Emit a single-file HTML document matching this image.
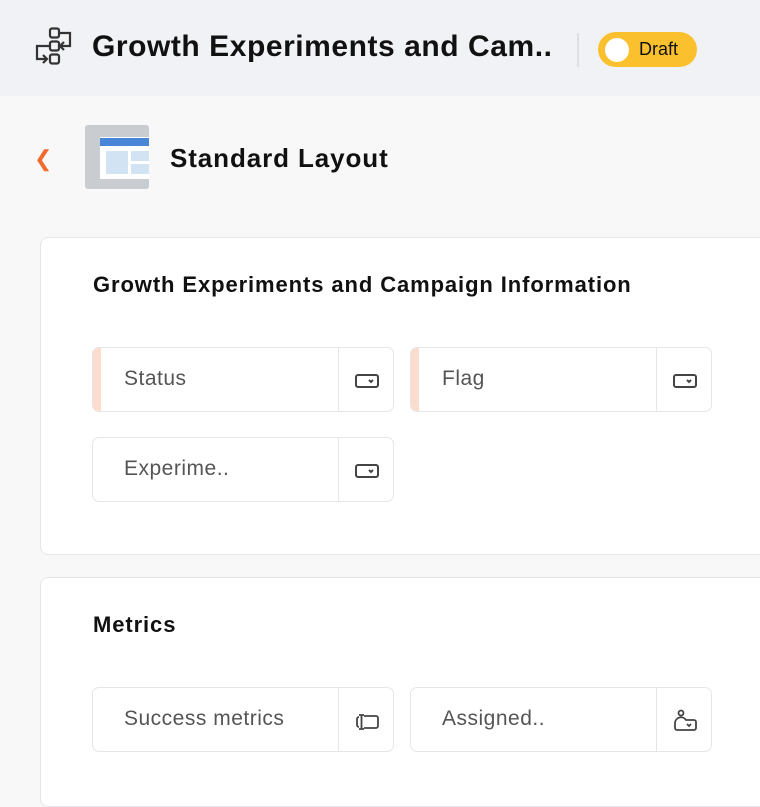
<!DOCTYPE html>
<html><head><style>
*{box-sizing:border-box;margin:0;padding:0}
body{width:760px;height:788px;overflow:hidden;background:#f8f8f9;font-family:"Liberation Sans",sans-serif;position:relative}
.hdr{position:absolute;left:0;top:0;width:760px;height:96px;background:#f1f2f6}
.t1{position:absolute;left:92px;top:30px;font-size:30px;font-weight:bold;color:#111;letter-spacing:0.55px;white-space:nowrap}
.sep{position:absolute;left:577px;top:33px;width:2px;height:34px;background:#dedfe3}
.pill{position:absolute;left:598px;top:32px;width:99px;height:35px;border-radius:18px;background:#fbc02d}
.pill .c{position:absolute;left:7px;top:6px;width:24px;height:24px;border-radius:50%;background:#fff}
.pill span{position:absolute;left:41px;top:7px;font-size:18px;color:#111}
.back{position:absolute;left:34px;top:146px;color:#f26a2e;font-size:22px}
.t2{position:absolute;left:170px;top:143px;font-size:26px;font-weight:bold;color:#111;letter-spacing:0.9px}
.card{position:absolute;left:40px;width:740px;background:#fff;border:1px solid #e4e5e8;border-radius:8px}
.ct{position:absolute;left:52px;font-size:22px;font-weight:bold;color:#111;letter-spacing:0.9px;white-space:nowrap}
.f{position:absolute;width:302px;height:65px;border:1px solid #e4e6ea;border-radius:7px;background:#fff;overflow:hidden}
.f.req::before{content:"";position:absolute;left:0;top:0;width:8px;height:100%;background:#fcdccc}
.f .l{position:absolute;left:31px;top:19px;font-size:21px;color:#555;letter-spacing:0.5px;white-space:nowrap}
.f .ic{position:absolute;left:245px;top:0;width:56px;height:100%;border-left:1px solid #e4e6ea}
.f svg{position:absolute;left:15px;top:20px}
</style></head><body>
<div class="hdr">
<svg style="position:absolute;left:33px;top:27px" width="42" height="40" viewBox="0 0 42 40" fill="none" stroke="#333" stroke-width="2.2">
<rect x="17" y="1.5" width="9" height="9" rx="2"/><rect x="17" y="14.5" width="9" height="9" rx="2"/><rect x="17" y="27.5" width="9" height="9" rx="2"/>
<path d="M26 6h11v13h-10M31 15l-4 4 4 4"/><path d="M17 19H4v13h10M10 28l4 4-4 4"/>
</svg>
<div class="t1">Growth Experiments and Cam..</div>
<div class="sep"></div>
<div class="pill"><div class="c"></div><span>Draft</span></div>
</div>
<div class="back">&#10094;</div>
<div style="position:absolute;left:85px;top:125px;width:64px;height:64px;background:#c9ccd0;border-radius:3px"></div>
<div style="position:absolute;left:100px;top:137px;width:49px;height:42px;background:#fff"></div>
<div style="position:absolute;left:100px;top:138px;width:49px;height:8px;background:#4a86d8"></div>
<div style="position:absolute;left:106px;top:151px;width:22px;height:23px;background:#d2e3f4"></div>
<div style="position:absolute;left:131px;top:151px;width:18px;height:10px;background:#d2e3f4"></div>
<div style="position:absolute;left:131px;top:164px;width:18px;height:10px;background:#d2e3f4"></div>
<div class="t2">Standard Layout</div>

<div class="card" style="top:237px;height:318px">
<div class="ct" style="top:34px">Growth Experiments and Campaign Information</div>
</div>
<div class="card" style="top:577px;height:230px">
<div class="ct" style="top:34px">Metrics</div>
</div>

<div class="f req" style="left:92px;top:347px"><div class="l">Status</div><div class="ic"><svg width="26" height="26" viewBox="0 0 26 26" fill="none" stroke="#444" stroke-width="2"><rect x="2" y="7" width="22" height="12" rx="2"/><path d="M15 12l2 2 2-2"/></svg></div></div>
<div class="f req" style="left:410px;top:347px"><div class="l">Flag</div><div class="ic"><svg width="26" height="26" viewBox="0 0 26 26" fill="none" stroke="#444" stroke-width="2"><rect x="2" y="7" width="22" height="12" rx="2"/><path d="M15 12l2 2 2-2"/></svg></div></div>
<div class="f" style="left:92px;top:437px"><div class="l">Experime..</div><div class="ic"><svg width="26" height="26" viewBox="0 0 26 26" fill="none" stroke="#444" stroke-width="2"><rect x="2" y="7" width="22" height="12" rx="2"/><path d="M15 12l2 2 2-2"/></svg></div></div>
<div class="f" style="left:92px;top:687px"><div class="l">Success metrics</div><div class="ic"><svg width="26" height="26" viewBox="0 0 26 26" fill="none" stroke="#444" stroke-width="1.8"><path d="M5 7h5M5 21h5M7.5 7v14"/><path d="M10 8h12a2 2 0 0 1 2 2v8a2 2 0 0 1-2 2H10"/><path d="M5 9a2 2 0 0 0-2 2v6a2 2 0 0 0 2 2"/></svg></div></div>
<div class="f" style="left:410px;top:687px"><div class="l">Assigned..</div><div class="ic"><svg width="26" height="26" viewBox="0 0 26 26" fill="none" stroke="#444" stroke-width="1.8"><circle cx="9" cy="5" r="2.5"/><path d="M3 20v-5a6 6 0 0 1 11-3h8a2 2 0 0 1 2 2v6a2 2 0 0 1-2 2H5a2 2 0 0 1-2-2z"/><path d="M15 16l2 2 2-2"/></svg></div></div>
</body></html>
